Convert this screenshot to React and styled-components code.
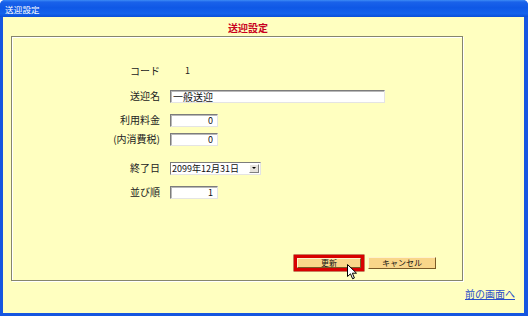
import styled, { createGlobalStyle } from "styled-components";

const GlobalStyle = createGlobalStyle`
  html, body {
    margin: 0;
    padding: 0;
    background: #ffffff;
  }
  body {
    font-family: "Noto Sans CJK JP", "Liberation Sans", sans-serif;
  }
`;

const Window = styled.div`
  width: 528px;
  height: 316px;
  box-sizing: border-box;
  display: flex;
  flex-direction: column;
  border-radius: 5px 5px 0 0;
  overflow: hidden;
  background: #1656e0;
`;

const TitleBar = styled.div`
  height: 17px;
  flex: none;
  display: flex;
  align-items: center;
  padding-left: 5px;
  background: linear-gradient(
    to bottom,
    #3d8cf5 0%,
    #1a62ea 12%,
    #0f58e6 45%,
    #1463ec 80%,
    #0a4fd8 100%
  );
  color: #ffffff;
  font-size: 8.5px;
  letter-spacing: 0.2px;
`;

const Body = styled.div`
  flex: 1;
  display: flex;
  flex-direction: column;
  margin: 0 4px 3px 3px;
  background: #ffffc0;
`;

const Heading = styled.h1`
  margin: 4px 0 0;
  width: 490px;
  text-align: center;
  font-size: 10px;
  line-height: 14px;
  font-weight: 700;
  color: #c8001e;
`;

const Panel = styled.div`
  margin: 1px 0 0 8px;
  width: 452px;
  height: 245px;
  box-sizing: border-box;
  border: 1px solid #86866c;
  box-shadow: inset 1px 1px 0 #ffffff, 1px 1px 0 #ffffff;
  display: flex;
  flex-direction: column;
  padding-top: 27px;
`;

const Form = styled.div`
  display: flex;
  flex-direction: column;
`;

const Row = styled.div`
  display: grid;
  grid-template-columns: 148px auto;
  grid-template-rows: 14px;
  column-gap: 10px;
  align-items: center;
  height: 14px;
  margin-top: ${(p) => p.$gap}px;
`;

const Label = styled.div`
  text-align: right;
  font-size: 10px;
  line-height: 14px;
  color: #222222;
`;

const Control = styled.div`
  display: flex;
  align-items: center;
  height: 14px;
`;

const Value = styled.div`
  font-size: 9px;
  line-height: 14px;
  padding-left: 15px;
  color: #222222;
`;

const TextBox = styled.input`
  box-sizing: border-box;
  width: ${(p) => p.$width}px;
  height: 13px;
  margin: 0;
  padding: 0 ${(p) => (p.$right ? 4 : 1)}px 0 2px;
  border: 1px solid;
  border-color: #7c7c7c #e4e4e4 #e4e4e4 #7c7c7c;
  box-shadow: inset 1px 1px 0 #b8b8b8;
  background: #ffffff;
  font-family: "Noto Sans CJK JP", "Liberation Sans", sans-serif;
  font-size: ${(p) => (p.$right ? 9 : 10)}px;
  line-height: 11px;
  color: #111111;
  text-align: ${(p) => (p.$right ? "right" : "left")};
  outline: none;
`;

const Select = styled.div`
  box-sizing: border-box;
  width: 91px;
  height: 13px;
  display: flex;
  align-items: center;
  border: 1px solid;
  border-color: #7c7c7c #e4e4e4 #e4e4e4 #7c7c7c;
  background: #ffffff;
  font-size: 9px;
  color: #111111;
  padding-left: 1px;
`;

const SelectText = styled.span`
  flex: 1;
  line-height: 11px;
`;

const DropButton = styled.span`
  width: 10px;
  height: 9px;
  margin-right: 1px;
  display: flex;
  align-items: center;
  justify-content: center;
  background: #e6e3dc;
  border: 1px solid;
  border-color: #ffffff #808080 #808080 #ffffff;
  box-sizing: border-box;
`;

const Arrow = styled.span`
  width: 0;
  height: 0;
  border-left: 2px solid transparent;
  border-right: 2px solid transparent;
  border-top: 2px solid #000000;
`;

const ButtonRow = styled.div`
  margin-top: auto;
  display: flex;
  justify-content: flex-end;
  align-items: center;
  gap: 4px;
  padding: 0 26px 9px 0;
`;

const FocusRing = styled.div`
  position: relative;
  border: 3px solid #d80000;
  box-shadow: 0 0 0 0.5px #900000;
  display: flex;
`;

const Button = styled.button`
  box-sizing: border-box;
  width: ${(p) => p.$width}px;
  height: ${(p) => p.$height}px;
  margin: 0;
  padding: 0;
  border: 1px solid;
  border-color: #fff2cc #7a5a26 #7a5a26 #fff2cc;
  background: #f9d68a;
  font-family: "Noto Sans CJK JP", "Liberation Sans", sans-serif;
  font-size: 8px;
  line-height: 8px;
  color: #111111;
`;

const Cursor = styled.svg`
  position: absolute;
  left: 50px;
  top: 6px;
`;

const Footer = styled.div`
  display: flex;
  justify-content: flex-end;
  padding: 7px 9px 0 0;
`;

const BackLink = styled.a`
  font-size: 10px;
  line-height: 12px;
  color: #2a4ec8;
  text-decoration: underline;
  cursor: pointer;
`;

function Field({ label, gap, children }) {
  return (
    <Row $gap={gap}>
      <Label>{label}</Label>
      <Control>{children}</Control>
    </Row>
  );
}

export default function App() {
  return (
    <>
      <GlobalStyle />
      <Window>
        <TitleBar>送迎設定</TitleBar>
        <Body>
          <Heading>送迎設定</Heading>
          <Panel>
            <Form>
              <Field label="コード" gap={0}>
                <Value>1</Value>
              </Field>
              <Field label="送迎名" gap={11}>
                <TextBox $width={215} defaultValue="一般送迎" readOnly />
              </Field>
              <Field label="利用料金" gap={10}>
                <TextBox $width={48} $right defaultValue="0" readOnly />
              </Field>
              <Field label="(内消費税)" gap={5}>
                <TextBox $width={48} $right defaultValue="0" readOnly />
              </Field>
              <Field label="終了日" gap={15}>
                <Select>
                  <SelectText>2099年12月31日</SelectText>
                  <DropButton>
                    <Arrow />
                  </DropButton>
                </Select>
              </Field>
              <Field label="並び順" gap={10}>
                <TextBox $width={48} $right defaultValue="1" readOnly />
              </Field>
            </Form>
            <ButtonRow>
              <FocusRing>
                <Button $width={64} $height={10}>更新</Button>
                <Cursor width="11" height="16" viewBox="0 0 11 16">
                  <path
                    d="M0.5 0.5 L0.5 12.5 L3.5 9.8 L5.6 14.8 L7.4 14 L5.4 9.2 L9.5 9.2 Z"
                    fill="#ffffff"
                    stroke="#000000"
                    strokeWidth="1"
                    strokeLinejoin="round"
                  />
                </Cursor>
              </FocusRing>
              <Button $width={68} $height={12}>キャンセル</Button>
            </ButtonRow>
          </Panel>
          <Footer>
            <BackLink>前の画面へ</BackLink>
          </Footer>
        </Body>
      </Window>
    </>
  );
}
